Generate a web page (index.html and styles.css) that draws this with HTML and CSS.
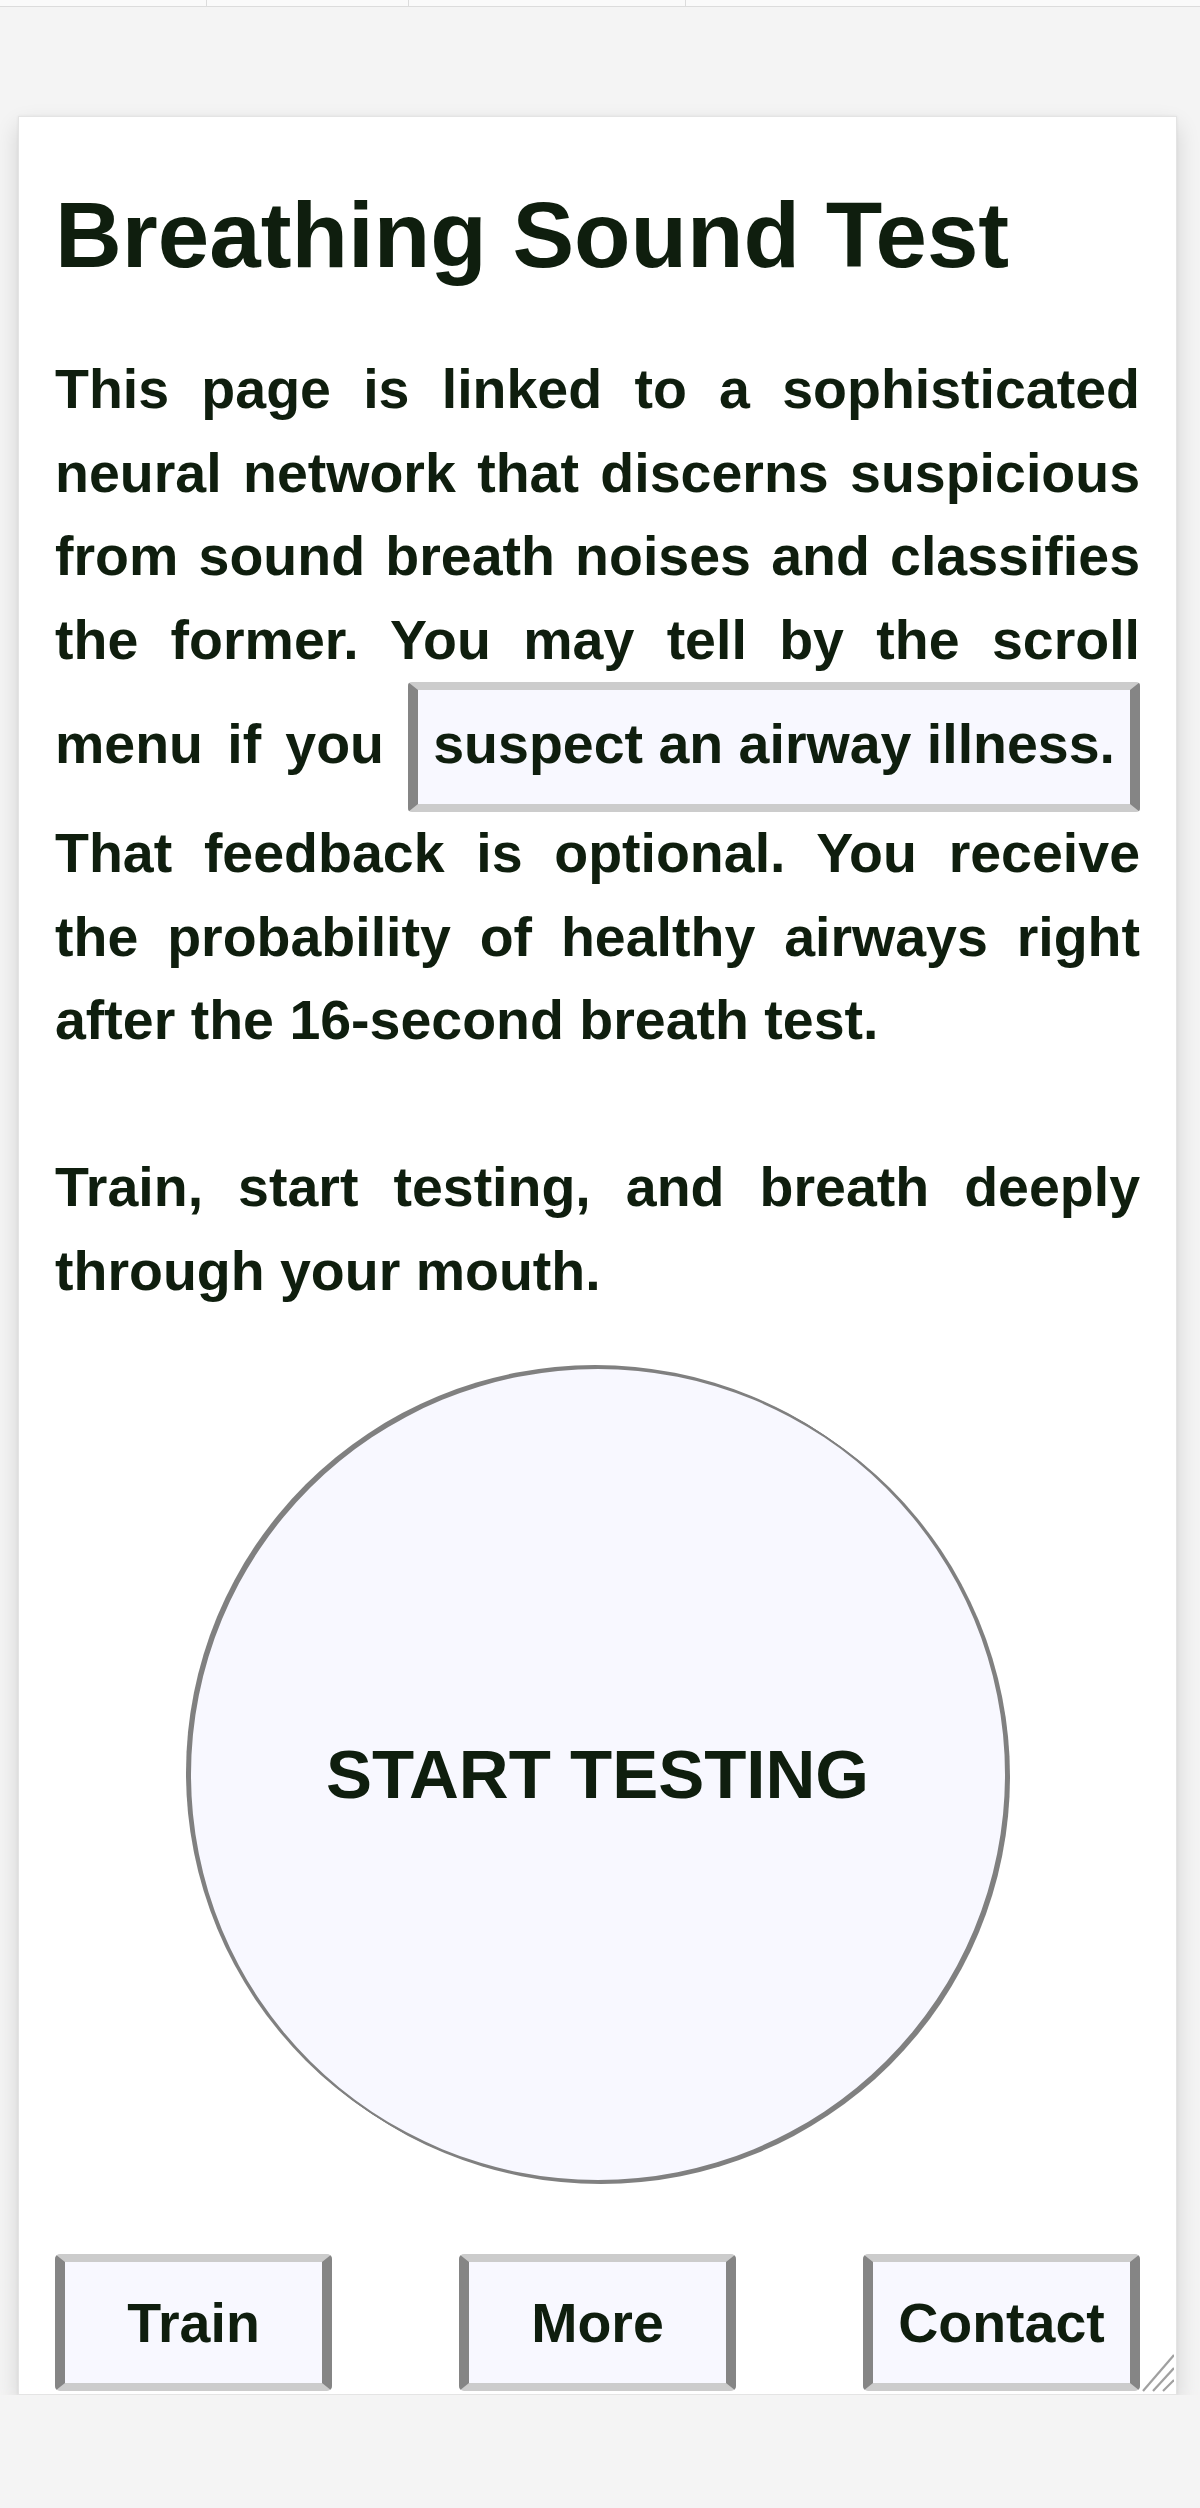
FILE: index.html
```html
<!DOCTYPE html>
<html lang="en">
<head>
<meta charset="utf-8">
<title>Breathing Sound Test</title>
<link rel="stylesheet" href="styles.css">
</head>
<body>
<div class="tabs"><span></span><span></span><span></span><span></span></div>
<main class="card">
  <h1>Breathing Sound Test</h1>
  <p class="text">This page is linked to a sophisticated neural network that discerns suspicious from sound breath noises and classifies the former. You may tell by the scroll menu if you <span class="pick">suspect an airway illness.</span> That feedback is optional. You receive the probability of healthy airways right after the 16-second breath test.</p>
  <p class="text second">Train, start testing, and breath deeply through your mouth.</p>
  <div class="start-wrap"><button class="start" type="button">START TESTING</button></div>
  <nav class="actions">
    <button class="btn" type="button">Train</button>
    <button class="btn" type="button">More</button>
    <button class="btn" type="button">Contact</button>
  </nav>
  <svg class="grip" width="34" height="38" viewBox="0 0 34 38" aria-hidden="true">
    <line x1="34" y1="1" x2="3" y2="37" stroke="#a0a0a0" stroke-width="2.2"/>
    <line x1="34" y1="14" x2="13" y2="37" stroke="#a0a0a0" stroke-width="2.2"/>
    <line x1="34" y1="26" x2="23" y2="37" stroke="#a0a0a0" stroke-width="2.2"/>
  </svg>
</main>
</body>
</html>
```
FILE: styles.css
```css
html, body {
  margin: 0;
  padding: 0;
}
body {
  background: #f4f4f4;
  font-family: "Liberation Sans", Arial, sans-serif;
  color: #0f1e0e;
}
.tabs {
  display: grid;
  grid-template-columns: 207px 202px 277px 1fr;
  height: 6px;
  background: #fafafa;
  border-bottom: 1px solid #dcdcdc;
}
.tabs span {
  border-right: 1px solid #dcdcdc;
}
.tabs span:last-child {
  border-right: none;
}
.card {
  position: relative;
  box-sizing: border-box;
  width: 1159px;
  margin: 109px 0 0 18px;
  padding: 65px 36px 3px 36px;
  background: #ffffff;
  border: 1px solid #e4e4e4;
  box-shadow: 0 10px 22px rgba(0, 0, 0, 0.14), 0 0 3px rgba(0, 0, 0, 0.06);
}
h1 {
  margin: 0 0 60px;
  font-size: 92.5px;
  line-height: 106px;
  font-weight: bold;
}
.text {
  margin: 0;
  font-size: 55.5px;
  line-height: 83.6px;
  font-weight: bold;
  text-align: justify;
}
.second {
  margin-top: 83.6px;
}
.pick {
  display: inline-block;
  padding: 13px 15px 17px;
  border-style: solid;
  border-width: 8px 10px;
  border-color: #cccccc #858585;
  border-radius: 4px;
  background: #f8f8ff;
}
.start-wrap {
  display: flex;
  justify-content: center;
  margin-top: 53px;
}
.start {
  width: 818px;
  height: 815px;
  padding: 0;
  border-radius: 50%;
  border: 2px solid #808080;
  box-shadow: -3px -2px 0 #808080, 3px 2px 0 #808080;
  background: #f8f8ff;
  font-family: "Liberation Sans", Arial, sans-serif;
  font-size: 69px;
  font-weight: bold;
  color: #0f1e0e;
}
.actions {
  display: flex;
  justify-content: space-between;
  margin-top: 72px;
}
.btn {
  width: 277px;
  height: 137px;
  padding: 2px 0 0;
  border-style: solid;
  border-width: 8px 10px;
  border-color: #cccccc #858585;
  border-radius: 5px;
  background: #f8f8ff;
  font-family: "Liberation Sans", Arial, sans-serif;
  font-size: 55.5px;
  font-weight: bold;
  color: #0f1e0e;
}
.grip {
  position: absolute;
  right: 2px;
  bottom: 2px;
}
```
